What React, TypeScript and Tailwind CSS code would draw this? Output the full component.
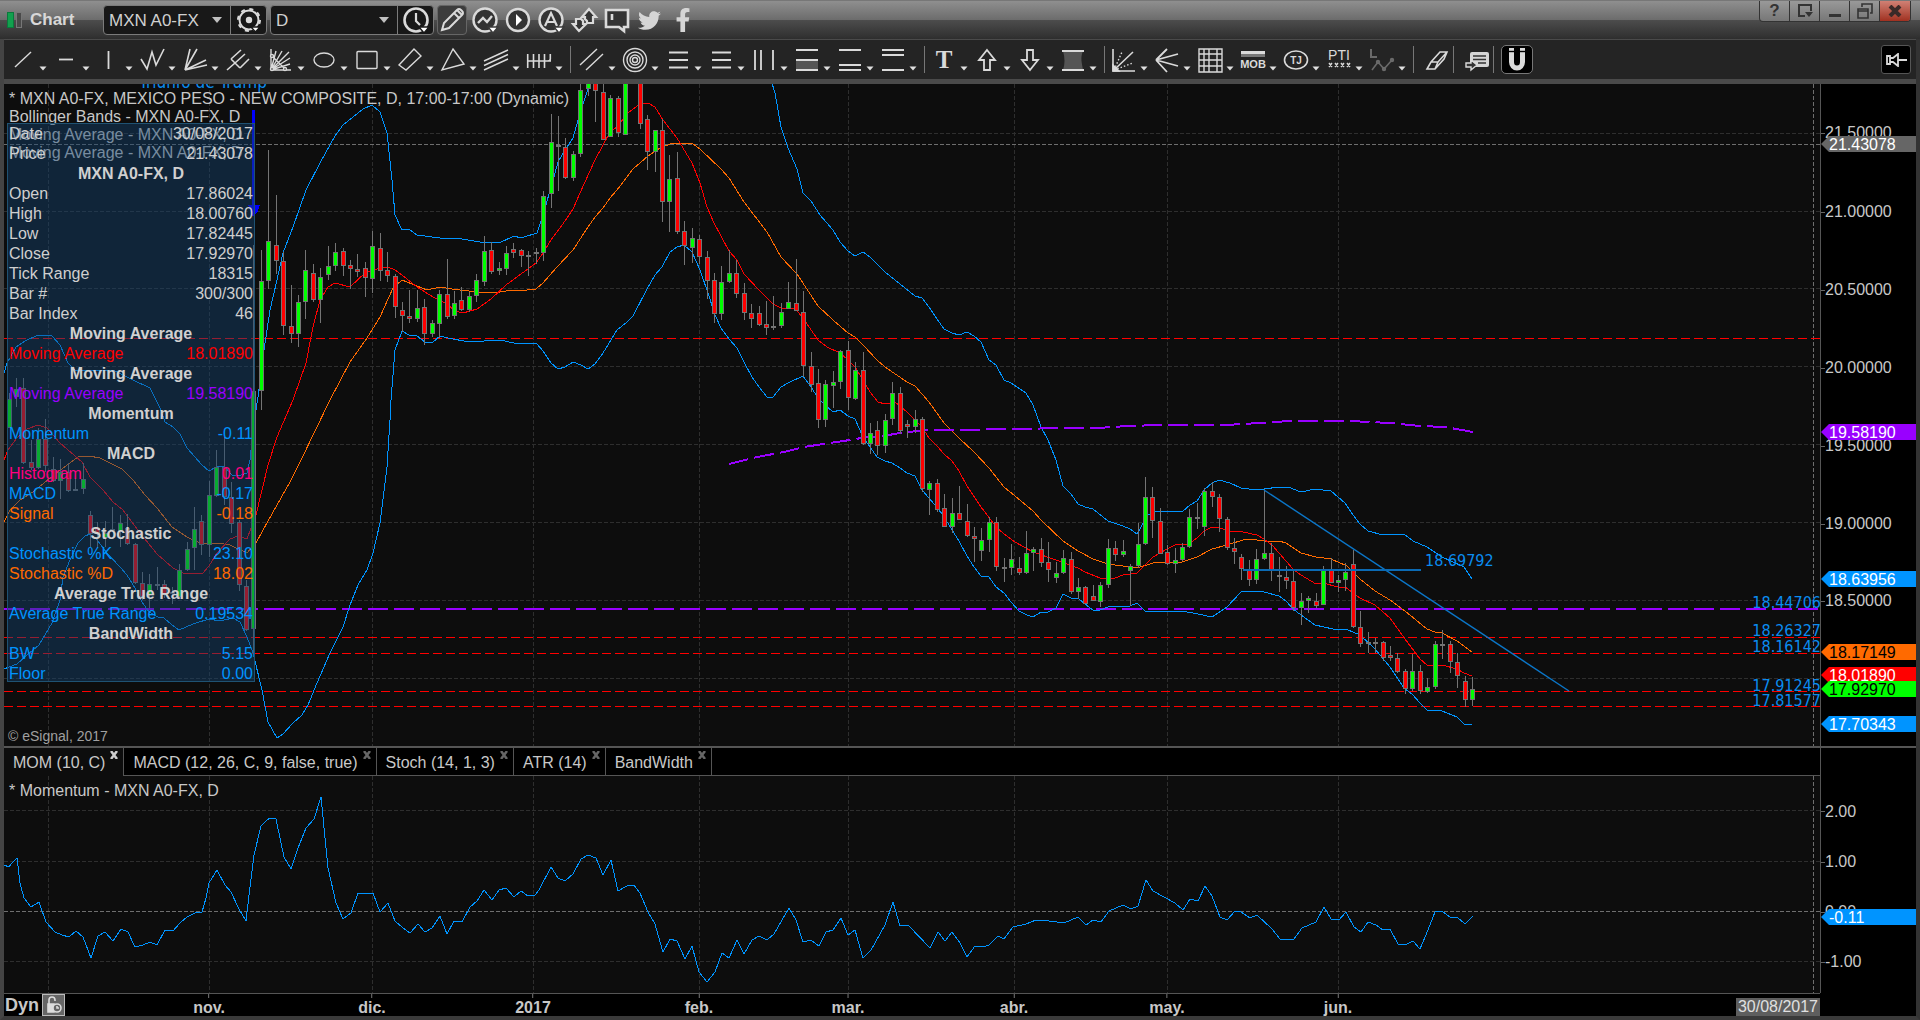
import type { ReactNode } from "react";
import { FaFacebookF, FaTwitter } from "react-icons/fa";

// chart coordinates: x 4..1820, price pane y 84..746, momentum pane y 776..993
const PRICE_TOP = 84;
const PRICE_H = 662;
const MOM_TOP = 776;
const MOM_H = 217;

type Candle = [x: number, high: number, top: number, bottom: number, low: number, up: 0 | 1];

const candles: Candle[] = [
  [9, 393, 399, 428, 428, 1], [16, 378, 389, 397, 407, 1], [23, 378, 388, 463, 464, 0], [31, 440, 462, 468, 470, 0],
  [38, 428, 439, 468, 469, 1], [45, 419, 439, 466, 472, 0], [53, 457, 469, 481, 482, 0], [60, 459, 472, 481, 499, 1],
  [68, 463, 472, 491, 492, 0], [75, 478, 489, 491, 491, 1], [83, 463, 479, 489, 494, 1], [90, 511, 515, 534, 547, 0],
  [97, 522, 528, 534, 548, 0], [105, 521, 533, 538, 547, 1], [112, 507, 529, 531, 532, 1], [120, 515, 523, 532, 547, 1],
  [127, 514, 528, 544, 545, 0], [135, 543, 544, 583, 584, 0], [142, 572, 583, 597, 600, 0], [149, 574, 584, 595, 608, 1],
  [157, 567, 584, 586, 590, 1], [164, 580, 584, 595, 598, 0], [172, 587, 592, 594, 604, 0], [179, 564, 570, 597, 598, 1],
  [187, 542, 549, 570, 571, 1], [194, 507, 529, 548, 570, 1], [201, 515, 521, 545, 555, 0], [209, 481, 495, 545, 557, 1],
  [216, 450, 467, 496, 497, 1], [224, 437, 467, 497, 505, 0], [231, 482, 497, 524, 533, 0], [239, 520, 522, 585, 591, 0],
  [246, 580, 586, 630, 631, 0], [253, 245, 391, 629, 653, 1],
  [261, 250, 281, 391, 410, 1], [268, 150, 241, 281, 289, 1], [276, 195, 245, 261, 274, 0], [283, 252, 261, 326, 335, 0],
  [291, 285, 326, 334, 343, 0], [298, 295, 302, 334, 347, 1], [305, 250, 270, 302, 319, 1], [313, 264, 273, 300, 302, 0],
  [320, 268, 277, 300, 323, 1], [328, 246, 266, 275, 280, 1], [335, 243, 252, 266, 271, 1], [343, 248, 251, 266, 276, 0],
  [350, 260, 265, 269, 289, 0], [357, 254, 269, 272, 277, 0], [365, 262, 268, 278, 297, 0], [372, 231, 246, 279, 293, 1],
  [380, 233, 248, 271, 281, 0], [387, 252, 270, 276, 282, 0], [395, 274, 276, 307, 318, 0], [402, 302, 310, 316, 332, 0],
  [409, 290, 316, 319, 323, 0], [417, 290, 308, 319, 322, 1], [424, 299, 307, 334, 345, 0], [432, 320, 323, 334, 337, 1],
  [439, 290, 294, 324, 338, 1], [447, 259, 294, 317, 319, 0], [454, 291, 303, 316, 319, 1], [461, 287, 300, 310, 311, 0],
  [469, 292, 296, 310, 312, 1], [476, 274, 280, 296, 302, 1], [484, 236, 251, 282, 286, 1], [491, 242, 250, 272, 274, 0],
  [499, 262, 268, 271, 275, 1], [506, 246, 253, 269, 275, 1], [513, 243, 249, 253, 258, 0], [521, 249, 250, 256, 267, 0],
  [528, 251, 255, 257, 276, 0], [536, 248, 252, 254, 264, 0], [543, 191, 196, 253, 261, 1], [551, 114, 142, 194, 208, 1],
  [558, 116, 145, 147, 191, 0], [565, 138, 147, 178, 179, 0], [573, 151, 154, 178, 181, 1], [580, 80, 90, 154, 157, 1],
  [588, 80, 80, 89, 96, 1], [595, 80, 80, 91, 122, 0], [603, 84, 92, 140, 140, 0], [610, 95, 98, 137, 137, 1],
  [618, 96, 98, 133, 137, 0], [625, 80, 80, 135, 135, 1], [640, 80, 80, 124, 129, 0], [647, 115, 119, 152, 170, 0],
  [655, 130, 130, 152, 172, 1], [662, 119, 130, 202, 222, 0], [669, 155, 179, 202, 232, 1], [677, 152, 178, 232, 234, 0],
  [684, 221, 231, 246, 265, 0], [692, 228, 238, 248, 263, 1], [699, 235, 239, 257, 264, 0], [707, 251, 257, 281, 299, 0],
  [714, 273, 280, 314, 323, 0], [721, 266, 282, 314, 320, 1], [729, 250, 273, 282, 283, 1], [736, 260, 273, 294, 298, 0],
  [744, 283, 293, 313, 320, 0], [751, 304, 313, 319, 328, 0], [759, 306, 313, 325, 326, 0], [766, 301, 324, 328, 335, 0],
  [773, 296, 326, 328, 330, 0], [781, 303, 312, 326, 328, 1], [788, 282, 302, 309, 309, 1], [796, 259, 303, 311, 311, 0],
  [803, 291, 312, 366, 377, 0], [811, 352, 366, 385, 392, 0], [818, 369, 383, 420, 428, 0], [825, 380, 384, 420, 427, 1],
  [833, 371, 382, 386, 408, 1], [840, 350, 351, 382, 389, 1], [848, 341, 350, 398, 410, 0], [855, 362, 370, 399, 400, 1],
  [863, 352, 370, 444, 445, 0], [870, 423, 433, 444, 454, 1], [877, 421, 430, 446, 455, 0], [885, 414, 420, 446, 453, 1],
  [892, 382, 393, 419, 425, 1], [900, 387, 393, 431, 434, 0], [907, 420, 424, 427, 438, 0], [915, 410, 419, 427, 433, 1],
  [922, 417, 419, 489, 492, 0], [929, 481, 483, 490, 515, 1], [937, 479, 483, 510, 512, 0], [944, 494, 508, 527, 527, 0],
  [952, 498, 513, 527, 533, 1], [959, 486, 513, 520, 520, 0], [967, 504, 521, 536, 537, 0], [974, 527, 536, 539, 562, 0],
  [981, 528, 540, 551, 561, 1], [989, 517, 522, 540, 552, 1], [996, 517, 522, 567, 571, 0], [1004, 558, 567, 569, 582, 0],
  [1011, 544, 559, 568, 575, 1], [1019, 557, 568, 573, 575, 0], [1026, 531, 553, 573, 574, 1], [1033, 547, 549, 553, 571, 1],
  [1041, 538, 549, 563, 567, 0], [1048, 542, 562, 570, 582, 0], [1056, 562, 573, 578, 583, 1], [1063, 550, 558, 573, 574, 1],
  [1071, 552, 559, 592, 594, 0], [1078, 578, 587, 592, 599, 1], [1085, 586, 587, 604, 604, 0], [1093, 585, 596, 601, 601, 0],
  [1100, 582, 585, 602, 607, 1], [1108, 539, 548, 585, 588, 1], [1115, 541, 548, 555, 561, 0], [1123, 540, 551, 555, 557, 1],
  [1130, 564, 566, 571, 606, 1], [1138, 523, 544, 566, 568, 1], [1145, 477, 497, 544, 545, 1], [1152, 487, 497, 521, 538, 0],
  [1160, 508, 521, 554, 554, 0], [1167, 545, 552, 564, 565, 0], [1175, 548, 560, 564, 573, 1], [1182, 543, 547, 560, 561, 1],
  [1189, 509, 517, 547, 548, 1], [1197, 503, 517, 519, 529, 0], [1204, 488, 491, 527, 536, 1], [1212, 482, 491, 497, 507, 0],
  [1219, 494, 497, 519, 532, 0], [1227, 517, 519, 548, 550, 0], [1234, 538, 548, 552, 564, 0], [1241, 554, 557, 569, 580, 0],
  [1249, 560, 569, 580, 586, 0], [1256, 549, 559, 580, 584, 1], [1264, 489, 553, 559, 560, 1], [1271, 543, 553, 571, 581, 0],
  [1279, 557, 575, 577, 592, 0], [1286, 566, 577, 581, 589, 0], [1293, 570, 581, 608, 611, 0], [1301, 593, 601, 608, 625, 1],
  [1308, 596, 598, 601, 613, 1], [1316, 593, 601, 606, 608, 0], [1323, 566, 569, 605, 605, 1], [1331, 558, 569, 583, 583, 0],
  [1338, 575, 580, 583, 592, 1], [1345, 563, 572, 580, 591, 1], [1353, 550, 564, 627, 628, 0], [1360, 611, 627, 644, 647, 0],
  [1368, 632, 642, 644, 653, 0], [1375, 638, 642, 644, 653, 0], [1383, 641, 642, 658, 661, 0], [1390, 646, 655, 658, 661, 0],
  [1397, 653, 658, 672, 673, 0], [1405, 669, 671, 689, 694, 0], [1412, 654, 671, 689, 691, 1], [1420, 665, 671, 691, 694, 0],
  [1427, 678, 687, 692, 693, 1], [1435, 641, 644, 687, 689, 1], [1442, 630, 644, 646, 659, 0], [1450, 641, 644, 662, 673, 0],
  [1457, 653, 662, 676, 688, 0], [1465, 676, 681, 700, 707, 0], [1472, 677, 689, 700, 706, 1],
];

const bandUpper =
  "4,373 7,363 16,347 25,341 38,335 52,336 60,345 68,363 75,370 91,371 113,370 133,380 150,388 160,408 165,422 173,427 180,434 187,448 202,465 209,471 218,466 225,467 232,475 238,476 247,473 250,460 253,430 258,397 263,357 270,310 277,280 283,253 293,227 306,190 320,163 335,136 343,125 353,117 363,109 372,105 380,112 387,133 392,180 395,215 402,230 409,229 417,235 440,238 462,239 480,242 499,243 514,236 521,238 537,233 543,215 551,187 554,177 558,162 565,150 573,138 580,113 587,92 591,80";
const bandUpper2 =
  "771,80 775,93 781,127 788,148 797,169 803,193 811,201 820,215 833,230 840,242 848,251 855,256 863,252 870,257 885,272 900,284 915,296 922,298 929,307 937,319 944,329 952,333 959,335 967,332 974,336 981,342 989,360 996,365 1004,380 1011,383 1026,393 1033,405 1041,427 1048,440 1056,460 1063,486 1071,494 1078,504 1085,507 1093,509 1108,521 1123,526 1130,529 1137,534 1148,515 1155,512 1167,511 1182,512 1190,505 1197,501 1204,490 1212,483 1219,480 1230,483 1241,488 1249,489 1264,489 1279,487 1288,487 1301,492 1315,489 1331,491 1345,503 1353,515 1360,524 1368,531 1383,535 1404,534 1413,541 1427,547 1442,557 1464,567 1472,579";
const bandLower =
  "4,669 17,664 27,655 39,645 52,623 60,600 63,577 70,560 78,543 85,536 90,534 97,540 107,553 120,567 127,575 135,588 142,602 149,612 158,617 164,618 172,625 179,630 193,624 209,619 220,621 233,618 240,622 247,637 253,653 262,690 268,722 277,738 283,734 293,723 302,715 308,705 317,683 330,653 343,627 350,605 358,585 367,570 373,553 380,523 387,467 390,420 391,400 395,350 402,331 409,335 417,336 425,342 432,343 440,336 448,338 469,342 500,340 514,343 537,344 543,351 551,363 558,369 565,367 573,362 581,365 588,369 595,364 603,353 617,330 627,322 633,316 647,289 655,275 662,267 670,252 677,247 684,245 692,252 700,270 708,293 715,315 721,328 729,339 737,348 744,362 752,377 759,387 767,397 773,397 781,387 788,383 803,376 811,387 818,398 825,405 833,412 840,410 848,416 855,419 863,437 870,447 877,457 885,461 892,463 900,468 907,473 915,476 922,490 929,498 943,515 952,530 959,541 967,556 974,567 981,576 989,577 996,587 1004,593 1011,602 1019,611 1027,615 1033,617 1041,612 1048,612 1056,608 1063,594 1071,598 1078,598 1085,604 1093,610 1100,610 1108,607 1130,606 1137,603 1145,611 1153,612 1182,611 1198,614 1212,617 1227,607 1241,592 1249,591 1264,592 1279,596 1286,601 1293,609 1301,615 1315,625 1333,629 1348,630 1360,635 1375,649 1390,667 1404,688 1412,694 1420,703 1427,710 1442,711 1457,717 1464,724 1472,724";
const maFast =
  "4,460 8,450 17,438 27,429 38,425 47,428 60,443 82,462 90,477 103,490 113,502 123,510 140,533 157,554 173,568 183,573 203,573 209,566 217,553 230,539 238,536 247,539 251,528 256,515 262,490 268,465 277,437 293,400 306,363 313,327 320,300 328,287 335,283 350,287 365,273 380,268 388,267 395,270 402,275 417,287 433,297 447,304 455,311 463,313 477,309 491,299 506,285 521,274 536,263 543,253 551,240 565,221 573,209 580,193 595,160 610,132 617,127 628,113 640,104 648,103 655,107 663,120 677,138 692,163 700,183 707,207 714,223 729,251 737,260 744,274 759,290 773,304 781,308 796,309 805,321 818,340 827,347 840,353 848,360 855,367 863,380 870,392 878,402 885,404 895,402 907,412 922,427 929,438 937,446 944,454 952,461 959,471 967,486 981,507 996,527 1004,534 1015,542 1033,552 1056,560 1078,568 1085,572 1100,578 1115,578 1123,575 1137,573 1145,565 1153,557 1167,549 1175,545 1189,544 1197,538 1204,531 1212,527 1219,528 1230,531 1243,532 1257,535 1264,539 1272,545 1279,553 1293,569 1301,575 1316,584 1323,583 1338,587 1345,587 1360,598 1375,605 1383,612 1390,618 1405,639 1420,659 1427,665 1442,665 1457,669 1464,673 1472,676";
const maSlow =
  "4,522 10,510 20,500 33,492 50,478 67,465 78,457 89,456 100,458 122,469 133,480 145,495 157,508 172,527 187,537 202,544 218,543 230,545 247,553 252,547 256,543 263,530 277,505 290,482 302,458 330,400 350,362 367,338 380,317 393,288 402,280 417,286 427,290 440,287 452,289 477,292 500,292 513,290 518,291 536,289 543,283 557,267 573,250 588,227 595,217 603,208 610,198 617,190 633,169 648,156 660,148 673,143 692,143 700,149 721,169 729,178 744,202 767,232 781,257 797,274 818,306 833,320 848,333 855,337 863,345 877,360 885,367 907,382 915,386 929,402 944,423 959,438 974,452 989,468 1004,487 1015,496 1033,511 1041,520 1063,541 1078,551 1093,559 1105,563 1115,565 1130,567 1137,568 1153,563 1182,562 1197,557 1212,549 1227,545 1243,540 1250,539 1264,541 1279,541 1286,543 1301,553 1316,557 1331,559 1347,566 1360,579 1375,591 1390,600 1405,611 1427,629 1435,632 1442,633 1457,641 1472,652";
const maLong =
  "729,464 757,457 784,452 804,447 823,444 850,440 867,437 883,436 900,433 917,431 928,430 973,430 987,429 1033,429 1047,428 1100,428 1110,427 1130,426 1158,425 1225,425 1260,423 1290,421 1350,421 1390,423 1420,426 1445,427 1473,432";

const momentum =
  "4,865 9,867 12,863 17,858 20,883 24,898 31,907 39,902 46,922 55,932 62,935 69,937 76,931 83,937 91,958 98,936 105,932 113,941 121,929 128,932 135,947 143,945 150,942 157,945 165,930 173,931 180,923 187,917 195,913 202,912 206,898 209,883 217,870 225,885 231,892 239,909 246,921 250,887 254,855 261,826 266,821 270,818 276,819 284,857 291,869 298,848 306,828 314,819 321,797 328,868 336,903 343,919 351,913 358,893 373,893 380,912 388,903 395,921 403,928 410,933 418,924 425,932 432,928 440,916 447,934 454,921 462,922 470,907 477,901 484,890 492,900 499,890 506,888 514,897 521,891 528,896 535,895 539,890 551,867 558,878 565,881 573,874 581,859 588,855 596,858 603,875 611,860 618,891 627,886 634,885 640,893 648,912 655,924 663,952 670,939 677,941 685,959 692,946 699,972 707,982 715,972 722,953 729,958 737,940 744,954 752,940 759,936 767,940 774,934 789,908 796,920 803,942 811,940 819,946 826,932 833,930 841,918 848,935 855,930 863,958 871,950 885,925 893,902 900,926 908,925 930,948 938,932 945,941 952,932 960,943 967,957 975,946 983,947 989,945 998,936 1004,939 1013,927 1026,924 1036,920 1042,920 1064,923 1078,917 1086,925 1093,920 1101,922 1109,911 1123,905 1131,909 1138,906 1146,880 1153,891 1175,903 1183,910 1190,899 1198,901 1205,886 1212,896 1220,917 1227,920 1235,911 1241,912 1250,918 1257,915 1272,929 1280,939 1294,939 1302,928 1316,922 1324,907 1331,919 1339,920 1346,912 1354,927 1361,932 1368,922 1376,925 1383,930 1390,929 1398,944 1405,945 1413,941 1420,949 1428,930 1435,912 1442,911 1450,917 1457,917 1465,924 1473,916";

const gridX = [48, 209, 372, 533, 699, 848, 1014, 1167, 1338];
const gridY = [133, 211, 288, 366, 444, 522, 600, 678];
const redLevels = [338, 637, 653, 691, 706];

const levelLabels = [
  { text: "18.44706", y: 608 },
  { text: "18.26327", y: 636 },
  { text: "18.16142", y: 652 },
  { text: "17.91245", y: 691 },
  { text: "17.81577", y: 706 },
];

const priceTicks = [
  { label: "21.50000", y: 133 },
  { label: "21.00000", y: 212 },
  { label: "20.50000", y: 290 },
  { label: "20.00000", y: 368 },
  { label: "19.50000", y: 446 },
  { label: "19.00000", y: 524 },
  { label: "18.50000", y: 601 },
];

const priceTags = [
  { label: "21.43078", y: 144, tone: "bg-[#666666] text-white" },
  { label: "19.58190", y: 432, tone: "bg-[#9900ff] text-white" },
  { label: "18.63956", y: 579, tone: "bg-[#0094ff] text-white" },
  { label: "18.17149", y: 652, tone: "bg-[#ff6a00] text-black" },
  { label: "18.01890", y: 675, tone: "bg-[#ff0000] text-white" },
  { label: "17.92970", y: 689, tone: "bg-[#00ff00] text-black" },
  { label: "17.70343", y: 724, tone: "bg-[#0094ff] text-white" },
];

const momTicks = [
  { label: "2.00", y: 812 },
  { label: "1.00", y: 862 },
  { label: "0.00", y: 912 },
  { label: "-1.00", y: 962 },
];

type Row = { title: string } | { label: string; value: string; tone: string };

const rows: Row[] = [
  { label: "Date", value: "30/08/2017", tone: "text-[#cfcfcf]" },
  { label: "Price", value: "21.43078", tone: "text-[#cfcfcf]" },
  { title: "MXN A0-FX, D" },
  { label: "Open", value: "17.86024", tone: "text-[#cfcfcf]" },
  { label: "High", value: "18.00760", tone: "text-[#cfcfcf]" },
  { label: "Low", value: "17.82445", tone: "text-[#cfcfcf]" },
  { label: "Close", value: "17.92970", tone: "text-[#cfcfcf]" },
  { label: "Tick Range", value: "18315", tone: "text-[#cfcfcf]" },
  { label: "Bar #", value: "300/300", tone: "text-[#cfcfcf]" },
  { label: "Bar Index", value: "46", tone: "text-[#cfcfcf]" },
  { title: "Moving Average" },
  { label: "Moving Average", value: "18.01890", tone: "text-[#ff0000]" },
  { title: "Moving Average" },
  { label: "Moving Average", value: "19.58190", tone: "text-[#9900ff]" },
  { title: "Momentum" },
  { label: "Momentum", value: "-0.11", tone: "text-[#0094ff]" },
  { title: "MACD" },
  { label: "Histogram", value: "0.01", tone: "text-[#ff0080]" },
  { label: "MACD", value: "-0.17", tone: "text-[#0094ff]" },
  { label: "Signal", value: "-0.18", tone: "text-[#ff6a00]" },
  { title: "Stochastic" },
  { label: "Stochastic %K", value: "23.10", tone: "text-[#0094ff]" },
  { label: "Stochastic %D", value: "18.02", tone: "text-[#ff6a00]" },
  { title: "Average True Range" },
  { label: "Average True Range", value: "0.19534", tone: "text-[#0094ff]" },
  { title: "BandWidth" },
  { label: "BW", value: "5.15", tone: "text-[#0094ff]" },
  { label: "Floor", value: "0.00", tone: "text-[#0094ff]" },
];

const tabs = ["MOM (10, C)", "MACD (12, 26, C, 9, false, true)", "Stoch (14, 1, 3)", "ATR (14)", "BandWidth"];

const months = [
  { label: "nov.", x: 209 },
  { label: "dic.", x: 372 },
  { label: "2017", x: 533 },
  { label: "feb.", x: 699 },
  { label: "mar.", x: 848 },
  { label: "abr.", x: 1014 },
  { label: "may.", x: 1167 },
  { label: "jun.", x: 1338 },
];

const Glyph = ({ children }: { children: ReactNode }) => (
  <svg viewBox="0 0 24 24" className="h-6 w-6 shrink-0 overflow-visible" fill="none" stroke="#dadada" strokeWidth="1.4">
    {children}
  </svg>
);

const Caret = () => (
  <svg viewBox="0 0 8 5" className="h-[5px] w-2 shrink-0" fill="#e0e0e0">
    <path d="M0.500 0.500h7L4 4.500z" />
  </svg>
);

type Tool = { name: string; icon: ReactNode };

const toolGroups: Tool[][] = [
  [
    { name: "Trend line", icon: <path d="M4 19 20 4" /> },
    { name: "Horizontal line", icon: <path d="M5 11.500h14" strokeWidth="1.800" /> },
    { name: "Vertical line", icon: <path d="M11.500 3v18" strokeWidth="1.800" /> },
    { name: "Elliott wave", icon: <path d="M1 11l6 10 5-17 4 13 8-16" strokeWidth="1.600" /> },
    { name: "Fan", icon: <path d="M2 22 7 1M2 22 14 1M2 22l21-10M2 22l22-5" strokeWidth="1.600" /> },
    { name: "Pitchfork", icon: <path d="M1 22l8-7M5 11l9 9M5 11l10-9M9 15l10-9M14 20l9-9" strokeWidth="1.600" /> },
    {
      name: "Gann box",
      icon: (
        <>
          <path d="M2 1v21h20M2 22 20 4M2 22 13 3M2 22l19-12M2 22 7 3M2 22l19-6M3 8l13 13" />
          <circle cx="3" cy="8" r="1.500" fill="#242424" />
          <circle cx="16" cy="21" r="1.500" fill="#242424" />
          <circle cx="3" cy="21" r="1.500" fill="#242424" />
        </>
      ),
    },
    { name: "Ellipse", icon: <ellipse cx="12" cy="12" rx="10" ry="7" /> },
    { name: "Rectangle", icon: <rect x="2" y="3.500" width="20" height="17" rx="1" /> },
    { name: "Parallelogram", icon: <path d="M1 17 16 1l7 7L8 22z" /> },
    { name: "Triangle", icon: <path d="M12 1 23 16 1 22z" /> },
    { name: "Regression", icon: <path d="M0 13 24 2M0 17.500 24 6.500M0 22 24 11" /> },
    {
      name: "Time cycles",
      icon: <path d="M0 13h24M.700 6v14M6.500 6v14M12 6v14M17.500 6v14M23.300 6v5q0 2-3 2" strokeWidth="1.600" />,
    },
  ],
  [
    { name: "Channel", icon: <path d="M0 17 17 1M6 22 23 6" /> },
    {
      name: "Arcs",
      icon: (
        <>
          <circle cx="12" cy="12" r="11.500" />
          <circle cx="12" cy="12" r="8" />
          <circle cx="12" cy="12" r="5" />
          <circle cx="12" cy="12" r="2.500" />
        </>
      ),
    },
    { name: "Retracement", icon: <path d="M3 4.500h19M3 12h19M3 19.500h19" strokeWidth="1.800" /> },
    { name: "Extension", icon: <path d="M3 4.500h19M3 12h19M3 19.500h19" strokeWidth="1.800" /> },
    { name: "Time zones", icon: <path d="M3 2v20M9 2v20M21 2v20" strokeWidth="1.800" /> },
    {
      name: "Upper zone",
      icon: (
        <>
          <path d="M1 12h22v10H1z" fill="#555" stroke="none" />
          <path d="M1 2h22M1 12h22M1 22h22" strokeWidth="1.800" />
        </>
      ),
    },
    { name: "Lower zone", icon: <path d="M1 2h22M1 17h22M1 22h22" strokeWidth="1.800" /> },
    { name: "Top zone", icon: <path d="M1 2h22M1 7h22M1 22h22" strokeWidth="1.800" /> },
  ],
  [
    {
      name: "Text",
      icon: (
        <text x="12" y="20" textAnchor="middle" fontSize="25" fontWeight="700" fill="#dadada" stroke="none" fontFamily="Liberation Serif, serif">
          T
        </text>
      ),
    },
    { name: "Up arrow", icon: <path d="M12 2l8 10h-5v10H9V12H4z" strokeWidth="1.800" /> },
    { name: "Down arrow", icon: <path d="M12 22l8-10h-5V2H9v10H4z" strokeWidth="1.800" /> },
    {
      name: "Region",
      icon: (
        <>
          <path d="M2 3h20c-3 7-1 12 0 19H2c2-6 2-12 0-19z" fill="#555" stroke="none" />
          <path d="M1 3h22M1 22h22" strokeWidth="1.800" />
        </>
      ),
    },
  ],
  [
    {
      name: "Angle",
      icon: (
        <>
          <path d="M1 1v22h22M2 22 21 4" strokeWidth="1.600" />
          <path d="M2 22 10 4M2 22l19-7" strokeDasharray="1.500 2" />
          <path d="M1 17v6h6z" fill="#dadada" />
        </>
      ),
    },
    { name: "Speed lines", icon: <path d="M1 12 12 1M1 12 23 6M1 12l22 6M1 12l11 12" strokeWidth="1.800" /> },
    { name: "Grid", icon: <path d="M1 1h23v23H1zM6 1v23M11 1v23M19 1v23M1 6h23M1 12h23M1 18h23" /> },
    {
      name: "MOB",
      icon: (
        <>
          <path d="M0 3h24v3H0z" fill="#dadada" stroke="none" />
          <path d="M0 6h24v3H0z" fill="#777" stroke="none" />
          <text x="12" y="20" textAnchor="middle" fontSize="11" fontWeight="700" fill="#dadada" stroke="none">
            MOB
          </text>
        </>
      ),
    },
    {
      name: "TJ",
      icon: (
        <>
          <ellipse cx="12" cy="12" rx="11.500" ry="9" strokeWidth="1.600" />
          <text x="12" y="16" textAnchor="middle" fontSize="10" fontWeight="700" fill="#dadada" stroke="none">
            TJ
          </text>
        </>
      ),
    },
    {
      name: "PTI",
      icon: (
        <>
          <text x="12" y="12" textAnchor="middle" fontSize="14" fill="#dadada" stroke="none">
            PTI
          </text>
          <path d="M2 15l3 4m0-4-3 4M8 15l3 4m0-4-3 4M14 15l3 4m0-4-3 4M20 15l3 4m0-4-3 4" />
        </>
      ),
    },
    {
      name: "Label points",
      icon: (
        <g stroke="#6a6a6a">
          <path d="M1 1v8h6" strokeWidth="2" />
          <path d="M2 22l6-8 6 7 8-9" strokeWidth="1.600" />
          <circle cx="8" cy="14" r="1.500" fill="#6a6a6a" />
          <circle cx="14" cy="21" r="1.500" fill="#6a6a6a" />
          <circle cx="22" cy="12" r="1.500" fill="#6a6a6a" />
        </g>
      ),
    },
  ],
];

const ToolGroup = ({ tools }: { tools: Tool[] }) => (
  <div className="flex h-full items-center">
    {tools.map((t) => (
      <button key={t.name} aria-label={t.name} className="flex w-[43px] items-center gap-1">
        <Glyph>{t.icon}</Glyph>
        <span className="mt-[18px]">
          <Caret />
        </span>
      </button>
    ))}
  </div>
);

const Sep = () => <div className="mr-1 h-[27px] w-1 border-l border-[#777]" />;

const TitleButton = ({ name, children }: { name: string; children: ReactNode }) => (
  <button aria-label={name} className="flex h-8 w-[33px] items-center justify-center">
    <Glyph>{children}</Glyph>
  </button>
);

const TitleBar = () => (
  <header className="flex h-[39px] items-start border-t border-[#777] bg-[linear-gradient(#8f8f8f_0%,#6c6c6c_50%,#4c4c4c_51%,#2e2e2e_100%)] pl-[7px]">
    <div className="flex h-[38px] w-24 items-center gap-[2px]">
      <span className="h-4 w-[7px] border border-[#0a7a3c] bg-[#12a04e]" />
      <span className="h-4 w-[6px] border border-[#777] bg-[#4a4a4a]" />
      <h1 className="ml-[6px] text-[17px] font-bold text-[#d8d8d8]">Chart</h1>
    </div>
    <div className="mt-1 flex h-[30px] rounded-[4px] border border-[#7b7b7b] bg-[#181818]">
      <label className="relative flex w-[126px] items-center">
        <select aria-label="Symbol" className="h-full w-full appearance-none bg-transparent pt-px pl-[5px] text-[17px] text-[#d0d0d0]">
          <option>MXN A0-FX</option>
        </select>
        <svg viewBox="0 0 10 6" className="pointer-events-none absolute right-2 h-[6px] w-[10px]" fill="#c0c0c0">
          <path d="M0 0h10L5 6z" />
        </svg>
      </label>
      <div className="flex w-[36px] items-center justify-center border-l border-[#7b7b7b]">
        <button aria-label="Settings">
          <Glyph>
            <circle cx="12" cy="12" r="9.500" strokeWidth="2" />
            <circle cx="12" cy="12" r="11" strokeWidth="2" strokeDasharray="4 4.640" />
            <circle cx="12" cy="12" r="2.500" fill="#dadada" />
            <path d="M14 19h9l-4.500 5z" fill="#fff" stroke="#181818" />
          </Glyph>
        </button>
      </div>
    </div>
    <div className="ml-[3px] mt-1 flex h-[30px] rounded-[4px] border border-[#7b7b7b] bg-[#181818]">
      <label className="relative flex w-[126px] items-center">
        <select aria-label="Interval" className="h-full w-full appearance-none bg-transparent pt-px pl-[5px] text-[17px] text-[#d0d0d0]">
          <option>D</option>
        </select>
        <svg viewBox="0 0 10 6" className="pointer-events-none absolute right-2 h-[6px] w-[10px]" fill="#c0c0c0">
          <path d="M0 0h10L5 6z" />
        </svg>
      </label>
      <div className="flex w-[36px] items-center justify-center border-l border-[#7b7b7b]">
        <button aria-label="Time template">
          <Glyph>
            <circle cx="12" cy="12" r="11.500" strokeWidth="2.600" />
            <path d="M12 5v8l4 4" strokeWidth="2.200" />
            <path d="M15 19h10l-5 6z" fill="#fff" stroke="#181818" />
          </Glyph>
        </button>
      </div>
    </div>
    <div className="mt-1 flex h-[30px] items-center">
      <button aria-label="Draw" className="ml-[3px] flex h-full w-[30px] items-center justify-center rounded-[4px] border border-[#666] bg-[#3c3c3c]">
        <Glyph>
          <path d="M2 22l2-7L17 2q2-2 4 0l1 1q2 2 0 4L9 20zM14 5l5 5M17 2l5 5" strokeWidth="2" />
        </Glyph>
      </button>
      <div className="ml-px flex items-center">
        <TitleButton name="Studies">
          <circle cx="12" cy="12" r="11.500" strokeWidth="2.400" fill="#333" />
          <path d="M5 15l5-5 4 4 5-6" strokeWidth="2.400" />
          <path d="M15 19h10l-5 6z" fill="#fff" stroke="#3a3a3a" />
        </TitleButton>
        <TitleButton name="Play">
          <circle cx="12" cy="12" r="11" strokeWidth="2.400" fill="#333" />
          <path d="M10 6l6 6-6 6z" fill="#fff" stroke="none" />
        </TitleButton>
        <TitleButton name="Alerts">
          <circle cx="12" cy="12" r="11.500" strokeWidth="2.400" fill="#333" />
          <path d="M6 18l6-13 6 13M8 14h8" strokeWidth="2.200" />
          <path d="M15 19h10l-5 6z" fill="#fff" stroke="#3a3a3a" />
        </TitleButton>
        <TitleButton name="Link">
          <path d="M17 1l7 8h-3v6h-6v-2l-2-2V9h-3zM7 23l-6-7h3v-5h5l2 2v3h3z" strokeWidth="2.200" fill="#333" />
        </TitleButton>
        <TitleButton name="Notes">
          <path d="M1 2h22v17h-4v4l-5-4H1zM7 6v6" strokeWidth="2.600" fill="#333" />
        </TitleButton>
        <button aria-label="Twitter" className="flex w-[33px] justify-center text-[#d5d5d5]">
          <FaTwitter size={23} />
        </button>
        <button aria-label="Facebook" className="flex w-[33px] justify-center text-[#d5d5d5]">
          <FaFacebookF size={24} />
        </button>
      </div>
    </div>
    <div className="mr-[9px] ml-auto flex h-[21px] divide-x divide-[#333] overflow-hidden rounded-b-[4px] border-x border-b border-[#333] bg-gradient-to-b from-[#999] to-[#777] text-[#333]">
      <button aria-label="Help" className="w-[30px] text-[17px] leading-5 font-bold">
        ?
      </button>
      <button aria-label="Menu" className="flex w-[30px] items-center justify-center">
        <svg viewBox="0 0 16 16" className="h-4 w-4" fill="none" stroke="#333" strokeWidth="2">
          <path d="M8 13H2V2h12v6" />
          <path d="M8 9h8l-4 5z" fill="#333" stroke="none" />
        </svg>
      </button>
      <button aria-label="Minimize" className="flex w-[30px] items-center justify-center">
        <span className="mt-2 h-[3px] w-3 bg-[#333]" />
      </button>
      <button aria-label="Restore" className="flex w-[30px] items-center justify-center">
        <svg viewBox="0 0 16 16" className="h-4 w-4" fill="none" stroke="#333" strokeWidth="1.600">
          <path d="M1 6h10v9H1zM1 8h10M5 4V1h10v9h-2" />
        </svg>
      </button>
      <button aria-label="Close" className="flex w-[30px] items-center justify-center bg-gradient-to-b from-[#d08074] to-[#a03020]">
        <svg viewBox="0 0 14 12" className="h-3 w-[14px]" stroke="#3a2a28" strokeWidth="4">
          <path d="M2 1l10 10M12 1 2 11" />
        </svg>
      </button>
    </div>
  </header>
);

const Toolbar = () => (
  <div className="flex h-10 shrink-0 items-center border-t border-[#4a4a4a] bg-[#242424] pl-[7px]">
    <ToolGroup tools={toolGroups[0]} />
    <div className="mr-[6px] h-[27px] w-1 border-l border-[#777]" />
    <ToolGroup tools={toolGroups[1]} />
    <Sep />
    <ToolGroup tools={toolGroups[2]} />
    <Sep />
    <ToolGroup tools={toolGroups[3]} />
    <Sep />
    <button aria-label="Erase" className="flex w-8 justify-center">
      <Glyph>
        <path d="M2 21l4-7 9-10h7l-3 7-9 10zM6 14h7l9-10M13 14l-3 7" strokeWidth="1.600" />
      </Glyph>
    </button>
    <Sep />
    <button aria-label="Cursor note" className="flex w-8 justify-center">
      <Glyph>
        <rect x="5" y="4" width="19" height="15" rx="2" fill="#d5d5d5" stroke="none" />
        <path d="M8 8h13M8 11.500h13M13 15h8" stroke="#333" />
        <path d="M1 15h5v-3l6 5-6 5v-3H1z" fill="#333" />
      </Glyph>
    </button>
    <Sep />
    <button aria-label="Snap" className="flex h-[29px] w-8 items-center justify-center rounded-[5px] border border-[#777] bg-black">
      <Glyph>
        <path d="M6.500 0v14a5.500 6 0 0 0 11 0V0" strokeWidth="5" />
        <path d="M2 3.500h20" stroke="#000" />
      </Glyph>
    </button>
    <button aria-label="Pin toolbar" className="mr-[5px] ml-auto flex h-[29px] w-[30px] items-center justify-center rounded-[3px] border border-[#555] bg-black">
      <svg viewBox="0 0 22 14" className="h-[14px] w-[22px]" fill="none" stroke="#dadada" strokeWidth="1.800">
        <path d="M2 3h3v8H2zM5 5h3l5-4v12L8 9H5M13 7h9" />
      </svg>
    </button>
  </div>
);

const Grid = ({ ys, top, height }: { ys: number[]; top: number; height: number }) => (
  <g stroke="#2e2e2e" strokeDasharray="4 2">
    {gridX.map((x) => (
      <path key={x} d={`M${x + 0.5} ${top}v${height}`} />
    ))}
    {ys.map((y) => (
      <path key={y} d={`M4 ${y + 0.5}H1820`} />
    ))}
  </g>
);

const PriceChart = () => (
  <svg
    viewBox="4 84 1816 662"
    preserveAspectRatio="none"
    className="absolute inset-0 h-full w-full"
    fill="none"
    shapeRendering="crispEdges"
    role="img"
    aria-label="MXN A0-FX daily candles"
  >
    <Grid ys={gridY} top={PRICE_TOP} height={PRICE_H} />
    <path d="M4 144.500H1820M1813.500 84V746" stroke="#6e6e6e" strokeDasharray="4 2" />
    <g stroke="#ff0000" strokeDasharray="9 4">
      {redLevels.map((y) => (
        <path key={y} d={`M4 ${y + 0.5}H1820`} />
      ))}
    </g>
    <path d="M4 609H1820" stroke="#9900ff" strokeWidth="2" strokeDasharray="20 6" />
    <g stroke="#0094ff">
      <polyline points={bandUpper} />
      <polyline points={bandUpper2} />
      <polyline points={bandLower} />
    </g>
    <polyline points={maSlow} stroke="#ff6a00" />
    <polyline points={maFast} stroke="#ff0000" />
    <polyline points={maLong} stroke="#9900ff" strokeWidth="2" strokeDasharray="20 6" />
    <g stroke="#747474">
      {candles.map(([x, high, top, bottom, low, up]) => (
        <g key={x}>
          <path d={`M${x + 0.5} ${high}V${low}`} />
          <rect
            x={x - 1.5}
            y={top + 0.5}
            width="4"
            height={Math.max(bottom - top - 1, 1)}
            fill={bottom - top < 3 ? "#747474" : up ? "#00ff00" : "#ff0000"}
          />
        </g>
      ))}
    </g>
    <path d="M253.500 110v102" stroke="#0000ff" strokeWidth="3" />
    <path d="M248 205h12l-2 6-4 5h-2z" fill="#0000ff" />
    <path d="M1264 490 1569 691" stroke="#0b76c8" strokeWidth="1.400" shapeRendering="auto" />
    <path d="M1243 570H1421" stroke="#0b6ab4" strokeWidth="2" />
    <g fill="#0a8cf0" fontSize="16" fontFamily="DejaVu Sans Condensed, Noto Sans, sans-serif">
      <text x="1425" y="566">
        18.69792
      </text>
      {levelLabels.map((l) => (
        <text key={l.text} x="1821" y={l.y} textAnchor="end">
          {l.text}
        </text>
      ))}
      <text x="203" y="88" textAnchor="middle" fontSize="17">
        Triunfo de Trump
      </text>
    </g>
  </svg>
);

const DataPanel = () => (
  <dl className="absolute top-[39px] left-[3px] h-[559px] w-[248px] border border-[#1f5273] bg-[#15426f]/45 px-px leading-5">
    {rows.map((r, i) =>
      "title" in r ? (
        <div key={i} className="text-center font-bold text-[#d0d0d0]">
          {r.title}
        </div>
      ) : (
        <div key={i} className={`flex justify-between ${r.tone}`}>
          <dt>{r.label}</dt>
          <dd>{r.value}</dd>
        </div>
      ),
    )}
  </dl>
);

type AxisProps = {
  ticks: { label: string; y: number }[];
  tags: { label: string; y: number; tone: string }[];
  top: number;
  height: number;
};

const Axis = ({ ticks, tags, top, height }: AxisProps) => {
  const pos = (y: number) => ({ top: `${((y - top) / height) * 100}%` });
  return (
    <div className="relative w-24 shrink-0 border-l border-[#555] bg-black leading-4 text-[#c8c8c8]">
      {ticks.map((t) => (
        <div key={t.label} style={pos(t.y)} className="absolute left-0 flex -translate-y-1/2 items-center">
          <span className="h-px w-1 bg-[#666]" />
          {t.label}
        </div>
      ))}
      {tags.map((t) => (
        <div
          key={t.label}
          style={pos(t.y)}
          className={`absolute inset-x-0 h-4 -translate-y-1/2 pl-2 leading-[18px] [clip-path:polygon(0_50%,8px_0,100%_0,100%_100%,8px_100%)] ${t.tone}`}
        >
          {t.label}
        </div>
      ))}
    </div>
  );
};

export default function App() {
  return (
    <div className="flex h-screen min-h-[820px] flex-col overflow-hidden bg-[#333] font-['Liberation_Sans',Arial,sans-serif] text-base text-[#c8c8c8]">
      <TitleBar />
      <main className="flex min-h-0 flex-1 flex-col border-r-4 border-b-4 border-l-4 border-r-[#333] border-b-[#3a3a3a] border-l-[#444]">
        <Toolbar />
        <div className="h-[5px] shrink-0 bg-[#4a4a4a]" />

        {/* price pane */}
        <section className="flex min-h-0 flex-[662]">
          <div className="relative flex-1 overflow-hidden bg-[#0d0d0d]">
            <PriceChart />
            <div className="absolute top-[6px] left-[5px] leading-[18px] whitespace-nowrap">
              <p>* MXN A0-FX, MEXICO PESO - NEW COMPOSITE, D, 17:00-17:00 (Dynamic)</p>
              <p>Bollinger Bands - MXN A0-FX, D</p>
              <p>Moving Average - MXN A0-FX, D</p>
              <p>Moving Average - MXN A0-FX, D</p>
            </div>
            <DataPanel />
            <p className="absolute bottom-0.5 left-1 text-sm leading-4 text-[#a0a0a0]">© eSignal, 2017</p>
          </div>
          <Axis ticks={priceTicks} tags={priceTags} top={PRICE_TOP} height={PRICE_H} />
        </section>
        <div className="h-[2px] shrink-0 bg-[#555]" />

        {/* study tabs */}
        <div className="flex h-7 shrink-0 bg-black">
          <div role="tablist" className="flex flex-1 border-b border-[#555]">
            {tabs.map((t, i) => (
              <div
                key={t}
                className={`flex items-start border-r border-[#555] pr-1 pl-[9px] ${i === 0 ? "-mb-px bg-[#0d0d0d]" : "bg-black"}`}
              >
                <button role="tab" aria-selected={i === 0} className="h-7 pt-px whitespace-nowrap">
                  {t}
                </button>
                <button aria-label={`Close ${t}`} className={`ml-1 pt-[3px] ${i === 0 ? "text-[#ccc]" : "text-[#666]"}`}>
                  <svg viewBox="0 0 8 8" className="h-2 w-[10px]" stroke="currentColor" strokeWidth="2.500">
                    <path d="M1 0l6 8M7 0 1 8" />
                  </svg>
                </button>
              </div>
            ))}
          </div>
          <div className="w-24 border-l border-[#555]" />
        </div>

        {/* momentum pane */}
        <section className="flex min-h-0 flex-[217]">
          <div className="relative flex-1 overflow-hidden bg-[#0d0d0d]">
            <svg
              viewBox="4 776 1816 217"
              preserveAspectRatio="none"
              className="absolute inset-0 h-full w-full"
              fill="none"
              shapeRendering="crispEdges"
              role="img"
              aria-label="Momentum"
            >
              <Grid ys={[810, 861, 961]} top={MOM_TOP} height={MOM_H} />
              <path d="M4 911.500H1820M1813.500 776V993" stroke="#6e6e6e" strokeDasharray="4 2" />
              <polyline points={momentum} stroke="#0094ff" />
            </svg>
            <p className="absolute top-[6px] left-[5px] leading-[18px]">* Momentum - MXN A0-FX, D</p>
          </div>
          <Axis
            ticks={momTicks}
            tags={[{ label: "-0.11", y: 917, tone: "bg-[#0094ff] text-white" }]}
            top={MOM_TOP}
            height={MOM_H}
          />
        </section>

        {/* time axis */}
        <footer className="flex h-[23px] shrink-0 bg-black">
          <div className="relative flex flex-1 items-center border-t border-[#555]">
            <span className="pl-px text-lg leading-5 font-bold">Dyn</span>
            <button aria-label="Lock time axis" className="ml-[3px] flex h-[22px] w-[23px] items-center justify-center border border-[#bbb] bg-[#666]">
              <svg viewBox="0 0 18 18" className="h-[18px] w-[18px]" fill="none" stroke="#ddd" strokeWidth="1.600">
                <path d="M4 8V4a3 3 0 0 1 6 0v1" />
                <path d="M3 8h6v8H3z" fill="#ddd" />
                <circle cx="12" cy="12" r="4" fill="#666" />
                <path d="M12 10v2h2" />
              </svg>
            </button>
            {months.map((m) => (
              <span
                key={m.label}
                style={{ left: `${((m.x - 4) / 1816) * 100}%` }}
                className="absolute top-0 flex -translate-x-1/2 flex-col items-center leading-5 font-bold before:h-1 before:w-px before:bg-[#777]"
              >
                {m.label}
              </span>
            ))}
            <span className="ml-auto self-end bg-[#5e5e5e] px-[2px] leading-[18px] text-[#e0e0e0]">30/08/2017</span>
          </div>
          <div className="w-24" />
        </footer>
      </main>
    </div>
  );
}
